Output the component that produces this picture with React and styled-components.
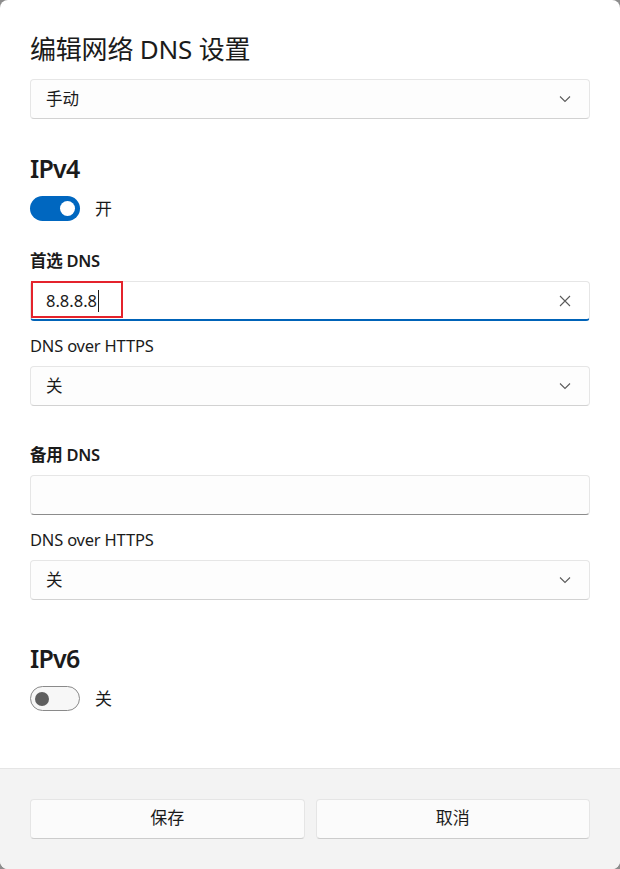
import React from "react";
import styled, { createGlobalStyle } from "styled-components";

const Global = createGlobalStyle`
  html, body { margin: 0; padding: 0; background: #8d8d8d; }
  body { font-family: "Noto Sans", "Noto Sans CJK SC", sans-serif; color: #1b1b1b; }
  * { box-sizing: border-box; }
`;

const Dialog = styled.div`
  width: 620px;
  height: 869px;
  background: #ffffff;
  border-radius: 8px;
  overflow: hidden;
  display: flex;
  flex-direction: column;
`;

const Content = styled.div`
  flex: 1;
  padding: 31px 30px 0 30px;
  display: flex;
  flex-direction: column;
`;

const Title = styled.h1`
  margin: 0 0 12px 0;
  font-size: 26px;
  line-height: 36px;
  font-weight: 400;
  letter-spacing: -0.2px;
`;

const Section = styled.h2`
  margin: ${(p) => p.$top}px 0 10px 0;
  font-size: 25px;
  line-height: 36px;
  font-weight: 600;
  letter-spacing: -0.8px;
`;

const Label = styled.div`
  margin-top: ${(p) => p.$top}px;
  margin-bottom: 8px;
  font-size: 16.5px;
  line-height: 24px;
  font-weight: ${(p) => (p.$bold ? 600 : 400)};
  letter-spacing: ${(p) => (p.$bold ? "-0.3px" : "-0.2px")};
`;

const Field = styled.div`
  position: relative;
  height: 40px;
  display: flex;
  align-items: center;
  padding: 0 14px 0 15px;
  background: ${(p) => (p.$focused ? "#ffffff" : "#fdfdfd")};
  border: 1px solid #e6e6e6;
  border-bottom: ${(p) => (p.$focused ? "2px solid #0063b8" : "1px solid #8c8c8c")};
  border-radius: 4px;
  font-size: 16.5px;
`;

const Select = styled(Field)`
  border-bottom: 1px solid #d2d2d2;
  justify-content: space-between;
`;

const FieldText = styled.span`
  flex: 1;
  line-height: 24px;
  display: flex;
  align-items: center;
`;

const Caret = styled.span`
  display: inline-block;
  width: 1px;
  height: 22px;
  background: #1b1b1b;
  margin-left: 1px;
`;

const Highlight = styled.div`
  position: absolute;
  left: 0;
  top: -1px;
  width: 92px;
  height: 37px;
  border: 2px solid #e4232c;
  pointer-events: none;
`;

const IconBox = styled.span`
  display: flex;
  align-items: center;
  justify-content: center;
  width: 16px;
  height: 16px;
  margin-right: 2px;
`;

const ToggleRow = styled.div`
  display: flex;
  align-items: center;
  gap: 15px;
  font-size: 17px;
  line-height: 24px;
`;

const Track = styled.div`
  width: 50px;
  height: 25px;
  border-radius: 13px;
  display: flex;
  align-items: center;
  padding: 0 5px;
  justify-content: ${(p) => (p.$on ? "flex-end" : "flex-start")};
  background: ${(p) => (p.$on ? "#0067c0" : "#f7f7f7")};
  border: ${(p) => (p.$on ? "none" : "1px solid #8a8a8a")};
`;

const Knob = styled.div`
  width: ${(p) => (p.$on ? "15px" : "14px")};
  height: ${(p) => (p.$on ? "15px" : "14px")};
  border-radius: 50%;
  background: ${(p) => (p.$on ? "#ffffff" : "#5f5f5f")};
  margin-left: ${(p) => (p.$on ? "0" : "-1px")};
`;

const Footer = styled.div`
  height: 101px;
  background: #f3f3f3;
  border-top: 1px solid #e5e5e5;
  padding: 30px 30px 0 30px;
  display: grid;
  grid-template-columns: 1fr 1fr;
  column-gap: 11px;
  align-items: start;
`;

const Button = styled.button`
  height: 40px;
  border-radius: 4px;
  background: #fbfbfb;
  border: 1px solid #e5e5e5;
  border-bottom-color: #cccccc;
  font-family: inherit;
  font-size: 17px;
  line-height: 24px;
  color: #1b1b1b;
  padding: 0 0 3px 0;
  display: flex;
  align-items: center;
  justify-content: center;
`;

const Chevron = () => (
  <IconBox>
    <svg width="12" height="8" viewBox="0 0 12 8">
      <path d="M1 1.5 L6 6.5 L11 1.5" fill="none" stroke="#5a5a5a" strokeWidth="1.1" />
    </svg>
  </IconBox>
);

const Cross = () => (
  <IconBox>
    <svg width="12" height="12" viewBox="0 0 12 12">
      <path d="M1 1 L11 11 M11 1 L1 11" fill="none" stroke="#5a5a5a" strokeWidth="1.1" />
    </svg>
  </IconBox>
);

const Dropdown = ({ value }) => (
  <Select>
    <FieldText>{value}</FieldText>
    <Chevron />
  </Select>
);

export default function App() {
  return (
    <>
      <Global />
      <Dialog>
        <Content>
          <Title>编辑网络 DNS 设置</Title>
          <Dropdown value="手动" />

          <Section $top={31}>IPv4</Section>
          <ToggleRow>
            <Track $on>
              <Knob $on />
            </Track>
            开
          </ToggleRow>

          <Label $bold $top={28}>首选 DNS</Label>
          <Field $focused>
            <Highlight />
            <FieldText>
              8.8.8.8
              <Caret />
            </FieldText>
            <Cross />
          </Field>

          <Label $top={13}>DNS over HTTPS</Label>
          <Dropdown value="关" />

          <Label $bold $top={37}>备用 DNS</Label>
          <Field>
            <FieldText />
          </Field>

          <Label $top={13}>DNS over HTTPS</Label>
          <Dropdown value="关" />

          <Section $top={40}>IPv6</Section>
          <ToggleRow>
            <Track>
              <Knob />
            </Track>
            关
          </ToggleRow>
        </Content>
        <Footer>
          <Button>保存</Button>
          <Button>取消</Button>
        </Footer>
      </Dialog>
    </>
  );
}
